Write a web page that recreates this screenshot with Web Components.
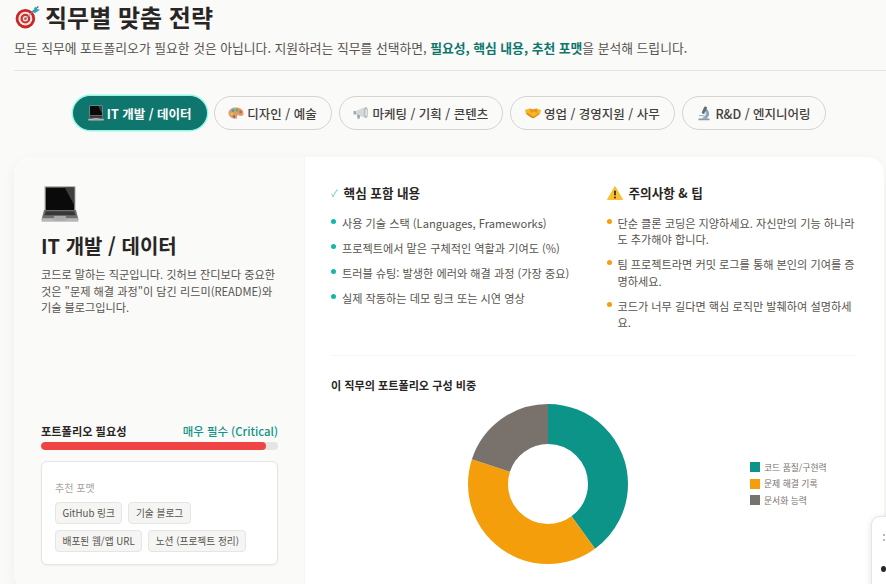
<!DOCTYPE html>
<html lang="ko">
<head>
<meta charset="utf-8">
<title>직무별 맞춤 전략</title>
<style>
  html, body { margin: 0; height: 100%; overflow: hidden; }
  body {
    background: #fafaf9;
    color: #292524;
    font-family: "Noto Sans CJK KR", "Noto Sans", sans-serif;
  }
</style>
</head>
<body>
<strategy-page>
  <page-header slot="header">
    <emoji-icon slot="icon" name="target" size="26"></emoji-icon>
    <span slot="title">직무별 맞춤 전략</span>
    모든 직무에 포트폴리오가 필요한 것은 아닙니다. 지원하려는 직무를 선택하면, <b>필요성, 핵심 내용, 추천 포맷</b>을 분석해 드립니다.
  </page-header>

  <role-tabs slot="tabs">
    <role-tab icon="laptop" active>IT 개발 / 데이터</role-tab>
    <role-tab icon="palette">디자인 / 예술</role-tab>
    <role-tab icon="megaphone">마케팅 / 기획 / 콘텐츠</role-tab>
    <role-tab icon="handshake">영업 / 경영지원 / 사무</role-tab>
    <role-tab icon="microscope">R&amp;D / 엔지니어링</role-tab>
  </role-tabs>

  <role-card slot="card">
    <role-summary slot="side" heading="IT 개발 / 데이터" need="매우 필수 (Critical)" percent="95">
      <emoji-icon slot="icon" name="laptop" size="38"></emoji-icon>
      코드로 말하는 직군입니다. 깃허브 잔디보다 중요한 것은 "문제 해결 과정"이 담긴 리드미(README)와 기술 블로그입니다.
      <format-tag slot="formats">GitHub 링크</format-tag>
      <format-tag slot="formats">기술 블로그</format-tag>
      <format-tag slot="formats">배포된 웹/앱 URL</format-tag>
      <format-tag slot="formats">노션 (프로젝트 정리)</format-tag>
    </role-summary>

    <tip-list slot="lists" color="#14b8a6">
      <span slot="icon" style="color:#14b8a6;font-weight:300;font-size:10px">✓</span>
      <span slot="title">핵심 포함 내용</span>
      <li>사용 기술 스택 (Languages, Frameworks)</li>
      <li>프로젝트에서 맡은 구체적인 역할과 기여도 (%)</li>
      <li>트러블 슈팅: 발생한 에러와 해결 과정 (가장 중요)</li>
      <li>실제 작동하는 데모 링크 또는 시연 영상</li>
    </tip-list>
    <tip-list slot="lists" color="#f59e0b">
      <emoji-icon slot="icon" name="warning" size="16"></emoji-icon>
      <span slot="title">주의사항 &amp; 팁</span>
      <li>단순 클론 코딩은 지양하세요. 자신만의 기능 하나라도 추가해야 합니다.</li>
      <li>팀 프로젝트라면 커밋 로그를 통해 본인의 기여를 증명하세요.</li>
      <li>코드가 너무 길다면 핵심 로직만 발췌하여 설명하세요.</li>
    </tip-list>

    <donut-chart slot="chart" heading="이 직무의 포트폴리오 구성 비중"></donut-chart>
  </role-card>
</strategy-page>
<float-tool></float-tool>

<script>
const ICONS = {
  target: `
    <path d="M21 11 L30 3" stroke="#5b6b78" stroke-width="1.6"/>
    <circle cx="14" cy="18" r="12" fill="#c62828"/>
    <circle cx="14" cy="18" r="8.6" fill="#f5e6e0"/>
    <circle cx="14" cy="18" r="6" fill="#d32f2f"/>
    <circle cx="14" cy="18" r="3.2" fill="#f5e6e0"/>
    <circle cx="14" cy="18" r="1.5" fill="#c62828"/>
    <path d="M14 18 L25 8" stroke="#8a979f" stroke-width="1.2"/>
    <path d="M23 10 L26 3 L28 6 L32 7 L26 11 Z" fill="#2aa7b8"/>`,
  laptop: `
    <path d="M3 1 H29 V22 H3 Z" fill="#a3a3a3"/>
    <path d="M4 2 H28 V21 H4 Z" fill="#0a0a0a"/>
    <path d="M20 2 H28 V17 Z" fill="#3f3f3f"/>
    <path d="M2.5 21 H29.5 L31.5 29 H0.5 Z" fill="#6f6f6f"/>
    <path d="M4 22 H28 L29 25.5 H3 Z" fill="#37373a"/>
    <path d="M0.5 28 H31.5 V30 Q31.5 31 30.5 31 H1.5 Q0.5 31 0.5 30 Z" fill="#b7b7b7"/>
    <rect x="11" y="26" width="10" height="4" fill="#a9a9a9"/>`,
  palette: `
    <path d="M1 16 C1 8 10 4 18 5 C26 6 32 11 31 18 C30 23 25 22 22 21 C19 20 17 22 18 25 C19 28 15 28 11 27 C6 26 1 22 1 16 Z" fill="#d9a066"/>
    <circle cx="10" cy="11" r="3" fill="#3f9de0"/>
    <circle cx="18" cy="10" r="3" fill="#58b368"/>
    <circle cx="25" cy="14" r="2.8" fill="#e84f4f"/>
    <circle cx="7.5" cy="18" r="3" fill="#f2c230"/>
    <circle cx="12" cy="23" r="2.6" fill="#8e5bc4"/>`,
  megaphone: `
    <path d="M3 13 L25 4 V26 L3 18 Z" fill="#d3d8da"/>
    <rect x="1" y="12" width="5" height="7" rx="1" fill="#a3abaf"/>
    <ellipse cx="26" cy="15" rx="4" ry="11" fill="#b1b8bb"/>
    <ellipse cx="26.5" cy="15" rx="2" ry="7" fill="#e6e9ea"/>
    <path d="M8 19 L14 21 L13 28 L9 27 Z" fill="#9aa2a6"/>`,
  handshake: `
    <path d="M0 10 L9 7 L16 9 L23 7 L32 10 L30 18 L18 26 Q16 27 14 26 L2 18 Z" fill="#f6b52c"/>
    <path d="M9 7 L16 9 L23 7 L26 16 L17 13 L12 16 Z" fill="#e8961c"/>
    <path d="M3 18 L14 26 L18 26 L29 18 L27 17 L17 24 L5 16 Z" fill="#d98a14"/>`,
  microscope: `
    <rect x="5" y="27" width="22" height="3.5" rx="1.2" fill="#7f99ad"/>
    <path d="M17 7 A10 10 0 0 1 22 25 L24 27 H12 L15 24 A7.5 7.5 0 0 0 16 10 Z" fill="#8aa0ae"/>
    <rect x="14" y="3" width="6" height="15" rx="1.5" transform="rotate(24 17 10)" fill="#5f6f7a"/>
    <rect x="6" y="20" width="11" height="2.4" fill="#a9bac5"/>
    <circle cx="19" cy="17" r="2.5" fill="#c7d3da"/>`,
  warning: `
    <path d="M16 3 L31 29 H1 Z" fill="#fbc02d" stroke="#fbc02d" stroke-width="2" stroke-linejoin="round"/>
    <rect x="14.3" y="11" width="3.4" height="10" rx="1.4" fill="#2b2b2b"/>
    <circle cx="16" cy="25" r="2" fill="#2b2b2b"/>`
};

// small helper, every element below has the same boilerplate
const shadow = (el, html) => {
  el.attachShadow({ mode: 'open' }).innerHTML = html;
  return el.shadowRoot;
};

class EmojiIcon extends HTMLElement {
  connectedCallback() {
    const size = this.getAttribute('size') || 16;
    shadow(this, `
      <style>:host { display: inline-flex; flex: none; } svg { display: block; }</style>
      <svg width="${size}" height="${size}" viewBox="0 0 32 32" fill="none">${ICONS[this.getAttribute('name')] || ''}</svg>
    `);
  }
}

class StrategyPage extends HTMLElement {
  constructor() {
    super();
    shadow(this, `
      <style>
        :host { display: block; padding: 0 2px 0 14px; }
        .tabs { margin-top: 25px; }
        .card { margin-top: 27px; }
      </style>
      <slot name="header"></slot>
      <div class="tabs"><slot name="tabs"></slot></div>
      <div class="card"><slot name="card"></slot></div>
    `);
  }
}

class PageHeader extends HTMLElement {
  constructor() {
    super();
    shadow(this, `
      <style>
        :host { display: block; padding-bottom: 13px; border-bottom: 1px solid #e7e5e4; margin-right: -2px; }
        h1 { display: flex; align-items: center; gap: 5px; margin: 0; font-size: 24px; line-height: 34px; font-weight: 700; color: #292524; }
        p { margin: 5px 0 0; font-size: 12.8px; line-height: 18px; color: #57534e; }
        ::slotted(b) { color: #0f766e; font-weight: 700; }
      </style>
      <h1><slot name="icon"></slot><slot name="title"></slot></h1>
      <p><slot></slot></p>
    `);
  }
}

class RoleTabs extends HTMLElement {
  constructor() {
    super();
    shadow(this, `
      <style>:host { display: flex; justify-content: center; gap: 7px; padding-left: 1px; }</style>
      <slot></slot>
    `);
  }
}

class RoleTab extends HTMLElement {
  connectedCallback() {
    shadow(this, `
      <style>
        :host {
          display: inline-flex; align-items: center; gap: 3px; box-sizing: border-box;
          height: 34px; padding: 0 14.2px 0 13.5px; border-radius: 17px;
          border: 1px solid #d6d3d1; background: #fafaf9;
          font-size: 12.5px; font-weight: 500; color: #44403c; white-space: nowrap;
        }
        :host([active]) {
          background: #0f766e; border-color: #0f766e; color: #fff; font-weight: 700;
          box-shadow: 0 0 0 1.5px #99f6e4;
        }
      </style>
      <emoji-icon name="${this.getAttribute('icon')}" size="16"></emoji-icon>
      <slot></slot>
    `);
  }
}

class RoleCard extends HTMLElement {
  constructor() {
    super();
    shadow(this, `
      <style>
        :host {
          display: grid; grid-template-columns: 291px 1fr; height: 433px;
          border-radius: 16px; overflow: hidden; background: #fff;
          box-shadow: 0 4px 14px rgba(41, 37, 36, 0.05);
        }
        .side { background: #fafaf9; border-right: 1px solid #f5f5f4; min-width: 0; }
        .main { padding: 27px 28px 0 26px; min-width: 0; }
        .lists { display: grid; grid-template-columns: 1fr 1fr; gap: 26px; padding-bottom: 24px; border-bottom: 1px solid #f5f5f4; }
        .chart { margin-top: 21px; }
      </style>
      <div class="side"><slot name="side"></slot></div>
      <div class="main">
        <div class="lists"><slot name="lists"></slot></div>
        <div class="chart"><slot name="chart"></slot></div>
      </div>
    `);
  }
}

class RoleSummary extends HTMLElement {
  connectedCallback() {
    shadow(this, `
      <style>
        :host { display: flex; flex-direction: column; box-sizing: border-box; height: 433px; padding: 28px 26px 0 27px; }
        .icon { height: 38px; }
        h2 { margin: 8px 0 0; font-size: 20px; line-height: 30px; font-weight: 700; color: #292524; }
        p { margin: 5px 0 0; font-size: 11.15px; line-height: 16.7px; color: #57534e; }
        .need { margin-top: auto; display: flex; justify-content: space-between; font-size: 11.2px; line-height: 16px; font-weight: 700; color: #292524; }
        .need span { color: #0d9488; font-weight: 500; font-size: 11.4px; }
        .bar { margin-top: 3px; height: 8px; border-radius: 4px; background: #e7e5e4; overflow: hidden; }
        .bar i { display: block; height: 100%; border-radius: 4px; background: #ef4444; }
        .box {
          margin: 11px 0 25px; padding: 18px 13px 12px; background: #fff;
          border: 1px solid #e7e5e4; border-radius: 6px; box-shadow: 0 1px 2px rgba(0, 0, 0, 0.05);
        }
        .box h3 { margin: 0 0 7px; font-size: 10px; line-height: 15px; font-weight: 400; color: #a8a29e; }
        .tags { display: flex; flex-wrap: wrap; gap: 6px; }
      </style>
      <div class="icon"><slot name="icon"></slot></div>
      <h2>${this.getAttribute('heading')}</h2>
      <p><slot></slot></p>
      <div class="need">포트폴리오 필요성<span>${this.getAttribute('need')}</span></div>
      <div class="bar"><i style="width:${this.getAttribute('percent')}%"></i></div>
      <div class="box">
        <h3>추천 포맷</h3>
        <div class="tags"><slot name="formats"></slot></div>
      </div>
    `);
  }
}

class FormatTag extends HTMLElement {
  constructor() {
    super();
    shadow(this, `
      <style>
        :host {
          display: inline-block; padding: 3px 6.5px; border-radius: 4px;
          background: #f5f5f4; border: 1px solid #e7e5e4;
          font-size: 9.7px; line-height: 14px; color: #57534e; white-space: nowrap;
        }
      </style>
      <slot></slot>
    `);
  }
}

class TipList extends HTMLElement {
  connectedCallback() {
    shadow(this, `
      <style>
        :host { display: block; min-width: 0; }
        h3 { display: flex; align-items: center; gap: 6px; margin: 0 0 13px; font-size: 12.6px; line-height: 18px; font-weight: 700; color: #292524; }
        ul { display: flex; flex-direction: column; gap: 8.6px; margin: 0; padding: 0; list-style: none; }
        ::slotted(li) {
          display: list-item; list-style: none; position: relative; padding-left: 11px;
          font-size: 11.15px; line-height: 16.4px; color: #57534e;
        }
      </style>
      <h3><slot name="icon"></slot><slot name="title"></slot></h3>
      <ul><slot></slot></ul>
    `);
    // list dots sit over the item's padding
    this.querySelectorAll('li').forEach((li) => {
      const dot = document.createElement('list-dot');
      dot.setAttribute('color', this.getAttribute('color'));
      li.prepend(dot);
    });
  }
}

class ListDot extends HTMLElement {
  connectedCallback() {
    shadow(this, `
      <style>
        :host { position: absolute; left: 0; top: 4px; width: 5px; height: 5px; border-radius: 50%; background: ${this.getAttribute('color')}; }
      </style>
    `);
  }
}

class DonutChart extends HTMLElement {
  connectedCallback() {
    const parts = [
      { label: '코드 품질/구현력', value: 40, color: '#0d9488' },
      { label: '문제 해결 기록', value: 40, color: '#f59e0b' },
      { label: '문서화 능력', value: 20, color: '#78716c' }
    ];
    let offset = 0;
    const rings = parts.map((p) => {
      const ring = `<circle cx="80" cy="80" r="60" fill="none" stroke="${p.color}" stroke-width="40" pathLength="100" stroke-dasharray="${p.value} ${100 - p.value}" stroke-dashoffset="${-offset}" transform="rotate(-90 80 80)"/>`;
      offset += p.value;
      return ring;
    }).join('');
    const legend = parts.map((p) => `<div class="row"><i style="background:${p.color}"></i>${p.label}</div>`).join('');
    shadow(this, `
      <style>
        :host { display: block; }
        h3 { margin: 0; font-size: 11.1px; line-height: 17px; font-weight: 700; color: #292524; }
        .body { display: flex; align-items: center; padding-left: 137px; margin-top: 10px; }
        svg { display: block; flex: none; }
        .legend { margin-left: 122px; display: flex; flex-direction: column; gap: 3.6px; }
        .row { display: flex; align-items: center; gap: 4px; font-size: 8.8px; line-height: 13px; color: #78716c; white-space: nowrap; }
        .row i { width: 10px; height: 10px; background: #000; }
      </style>
      <h3>${this.getAttribute('heading')}</h3>
      <div class="body">
        <svg width="160" height="160" viewBox="0 0 160 160">${rings}</svg>
        <div class="legend">${legend}</div>
      </div>
    `);
  }
}

// the browser-extension button stuck to the right edge of the page
class FloatTool extends HTMLElement {
  constructor() {
    super();
    shadow(this, `
      <style>
        :host {
          position: fixed; left: 871px; top: 516px; width: 40px; height: 90px; box-sizing: border-box;
          background: #fff; border: 1px solid #e7e5e4; border-radius: 9px;
          box-shadow: 0 1px 6px rgba(0, 0, 0, 0.12);
        }
        i { position: absolute; background: #a8a29e; width: 2px; height: 2px; border-radius: 50%; }
        b { position: absolute; left: 9px; top: 49px; width: 5px; height: 6px; border-radius: 50%; background: #292524; }
      </style>
      <i style="left:11px;top:17px"></i><i style="left:11px;top:22px"></i>
      <b></b>
    `);
  }
}

customElements.define('emoji-icon', EmojiIcon);
customElements.define('strategy-page', StrategyPage);
customElements.define('page-header', PageHeader);
customElements.define('role-tabs', RoleTabs);
customElements.define('role-tab', RoleTab);
customElements.define('role-card', RoleCard);
customElements.define('role-summary', RoleSummary);
customElements.define('format-tag', FormatTag);
customElements.define('tip-list', TipList);
customElements.define('list-dot', ListDot);
customElements.define('donut-chart', DonutChart);
customElements.define('float-tool', FloatTool);
</script>
</body>
</html>
